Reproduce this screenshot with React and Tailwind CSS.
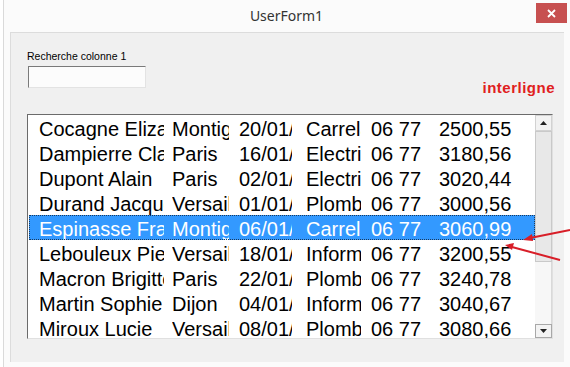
const rows = [
  ["Cocagne Elizabeth", "Montignac", "20/01/2015", "Carrelage", "06 77", "2500,55"],
  ["Dampierre Claude", "Paris", "16/01/2015", "Electricité", "06 77", "3180,56"],
  ["Dupont Alain", "Paris", "02/01/2015", "Electricité", "06 77", "3020,44"],
  ["Durand Jacques", "Versailles", "01/01/2015", "Plomberie", "06 77", "3000,56"],
  ["Espinasse François", "Montignac", "06/01/2015", "Carrelage", "06 77", "3060,99"],
  ["Lebouleux Pierre", "Versailles", "18/01/2015", "Informatique", "06 77", "3200,55"],
  ["Macron Brigitte", "Paris", "22/01/2015", "Plomberie", "06 77", "3240,78"],
  ["Martin Sophie", "Dijon", "04/01/2015", "Informatique", "06 77", "3040,67"],
  ["Miroux Lucie", "Versailles", "08/01/2015", "Plomberie", "06 77", "3080,66"],
];

const cols = [
  "w-[125px] mr-[8px]",
  "w-[57px] mr-[10px]",
  "w-[53px] mr-[14px]",
  "w-[55px] mr-[10px]",
  "w-[68px]",
  "w-[80px]",
];

const SELECTED = 4;

const Row = ({ cells, selected }) => (
  <div
    className={`h-[25px] shrink-0 flex pl-[10px] pt-[3px] leading-[22px] whitespace-nowrap ${
      selected
        ? "bg-[#3399ff] text-white outline-1 outline-dotted outline-offset-[-1px] outline-[#1b3a5c]"
        : "text-black"
    }`}
  >
    {cells.map((c, i) => (
      <div key={i} className={`${cols[i]} overflow-hidden shrink-0`}>
        {c}
      </div>
    ))}
  </div>
);

const Scrollbar = () => (
  <div className="w-[17px] shrink-0 flex flex-col bg-[#f4f4f4]">
    <div className="h-[16px] shrink-0 bg-[#f3f3f3] border border-[#d2d2d2] flex items-center justify-center">
      <svg width="7" height="4" viewBox="0 0 7 4">
        <path d="M0 4 L3.5 0 L7 4 Z" fill="#222" />
      </svg>
    </div>
    <div className="h-[131px] shrink-0 bg-[#e8e8e8] border border-[#c9c9c9]" />
    <div className="flex-1 bg-[#f7f7f7] border-r border-[#d9d9d9]" />
    <div className="h-[14px] shrink-0 bg-[#f3f3f3] border border-[#a8a8a8] flex items-center justify-center">
      <svg width="7" height="4" viewBox="0 0 7 4">
        <path d="M0 0 L3.5 4 L7 0 Z" fill="#222" />
      </svg>
    </div>
  </div>
);

export default function App() {
  return (
    <div
      className="relative w-[570px] h-[367px] overflow-hidden bg-white flex"
      style={{ fontFamily: '"Liberation Sans", Arial, sans-serif' }}
    >
      {/* excel grid behind the form */}
      <div className="w-[7px] shrink-0 flex">
        <div className="w-[3px] bg-white" />
        <div className="w-[1px] bg-[#dadada]" />
        <div className="flex-1 bg-[#fbfbfb]" />
      </div>

      <div className="flex-1 flex flex-col">
        <div className="h-[32px] shrink-0 flex items-start bg-[#fbfbfb]">
          <div className="w-[30px]" />
          <div
            className="flex-1 text-center text-[14px] leading-[32px] text-[#333]"
            style={{ fontFamily: '"Noto Sans", "Open Sans", sans-serif' }}
          >
            UserForm1
          </div>
          <div className="w-[31px] h-[20px] mt-[3px] mr-[3px] bg-[#c75050] flex items-center justify-center">
            <svg width="9" height="9" viewBox="0 0 9 9">
              <path d="M1 1 L8 8 M8 1 L1 8" stroke="#fff" strokeWidth="1.8" />
            </svg>
          </div>
        </div>

        <div className="flex-1 flex pl-[3px] pr-[6px] pb-[5px] bg-[#fbfbfb]">
          <div className="flex-1 bg-[#f0f0f0] border-t border-l border-[#dcdcdc] flex flex-col">
            <div className="h-[50px] mt-[17px] flex justify-between pl-[16px] pr-[9px]">
              <div className="flex flex-col">
                <div className="text-[10.5px] leading-[13px] text-black">Recherche colonne 1</div>
                <div className="ml-[1px] mt-[3px] w-[118px] h-[22px] bg-[#fcfcfc] border border-t-[#7a7a7a] border-l-[#7a7a7a] border-r-[#e3e3e3] border-b-[#e3e3e3]" />
              </div>
              <div className="mt-[29px] text-[15px] leading-[18px] font-bold tracking-[0.5px] text-[#e02020]">
                interligne
              </div>
            </div>

            <div className="ml-[16px] mt-[14px] w-[526px] h-[225px] bg-white border border-t-[#6b6b6b] border-l-[#6b6b6b] border-r-[#e0e0e0] border-b-[#e0e0e0] flex overflow-hidden">
              <div className="flex-1 flex flex-col pl-[1px] text-[20px] overflow-hidden">
                {rows.map((r, i) => (
                  <Row key={i} cells={r} selected={i === SELECTED} />
                ))}
              </div>
              <Scrollbar />
            </div>
          </div>
        </div>
      </div>

      <svg className="absolute left-0 top-0 pointer-events-none" width="570" height="367">
        <line x1="570" y1="230" x2="530" y2="238" stroke="#d81e28" strokeWidth="2" />
        <path d="M523 240 L532 234 L533 241 Z" fill="#d81e28" />
        <line x1="560" y1="260" x2="512" y2="247" stroke="#d81e28" strokeWidth="2" />
        <path d="M505 245 L514 243 L512 250 Z" fill="#d81e28" />
      </svg>
    </div>
  );
}
